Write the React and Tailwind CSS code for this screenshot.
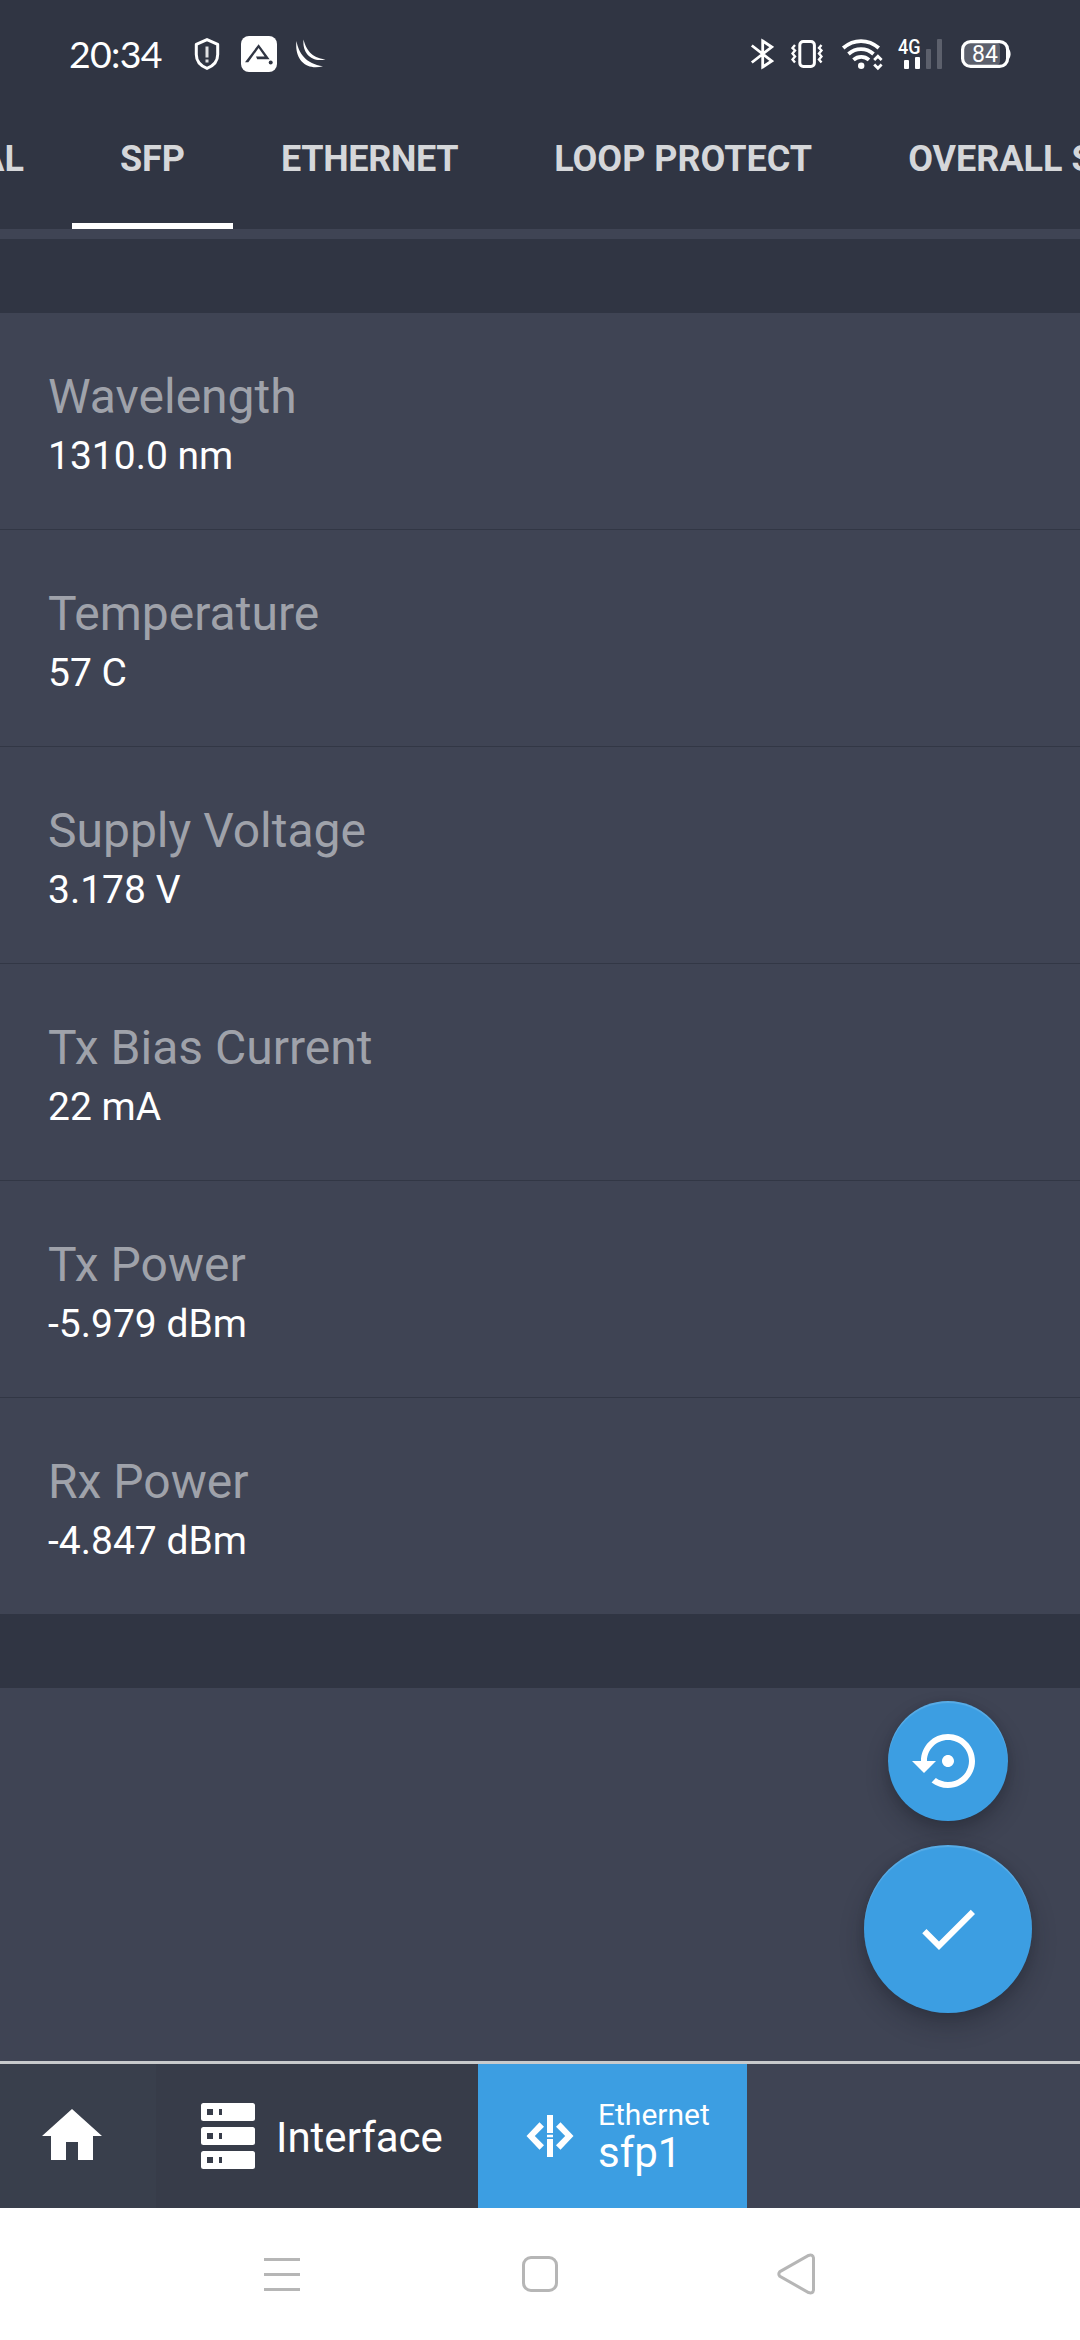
const tabs = [
  ['ETHERNET', 'tracking-[-0.35px]'],
  ['LOOP PROTECT', 'tracking-normal'],
  ['OVERALL STATS', 'tracking-normal'],
];

const rows = [
  ['Wavelength', '1310.0 nm'],
  ['Temperature', '57 C'],
  ['Supply Voltage', '3.178 V'],
  ['Tx Bias Current', '22 mA'],
  ['Tx Power', '-5.979 dBm'],
  ['Rx Power', '-4.847 dBm'],
];

function ShieldIcon() {
  return (
    <svg className="ml-[31px] h-9 w-[30px]" viewBox="0 0 30 36" fill="none" stroke="#fff">
      <path d="M15 3.600 25.700 8.400V18.500C25.700 25 21.500 29.800 15 32.400 8.500 29.800 4.300 25 4.300 18.500V8.400Z" strokeWidth="3" strokeLinejoin="round" />
      <path d="M15 10.500V21.500M15 23.500v3" strokeWidth="3" strokeOpacity="0.85" />
    </svg>
  );
}

function BadgeIcon() {
  return (
    <svg className="ml-[19px] size-9" viewBox="0 0 36 36">
      <rect width="36" height="36" rx="8" fill="#fff" />
      <path d="M4 26.300H7.300L17.600 12 23.600 20.600H15L16.200 23.200H28.600L17.600 8.200Z" fill="#303543" />
      <circle cx="29.700" cy="26.500" r="2" fill="#303543" />
    </svg>
  );
}

function SwooshIcon() {
  return (
    <svg className="ml-[18px] h-9 w-8" viewBox="0 0 32 36" fill="#fff">
      <path d="M1.500 5C3.500 17 11 28 28 30.200C12 35 -1 24 1.500 5Z" />
      <path d="M8.500 3.500C11 13 16 22 30.500 23.200C18 27 7 18 8.500 3.500Z" />
    </svg>
  );
}

function BluetoothIcon() {
  return (
    <svg className="h-9 w-6" viewBox="0 0 24 36" fill="none" stroke="#fff" strokeWidth="2.800">
      <path d="M1.800 9.500 21.700 25 12.700 31V5L21.700 11 1.800 26.500" />
    </svg>
  );
}

function VibrateIcon() {
  return (
    <svg className="ml-[17px] h-9 w-8" viewBox="0 0 32 36" fill="none" stroke="#fff">
      <rect x="8.800" y="5.500" width="14.600" height="25" rx="3.500" strokeWidth="3" />
      <path d="M4 9 1.500 12 4 14.500 1.500 17.500 4 20.500 1.500 23.500 4 26.500M30.500 9 28 12l2.500 2.500-2.500 3 2.500 3-2.500 3 2.500 3" strokeWidth="2.400" />
    </svg>
  );
}

function WifiIcon() {
  return (
    <svg className="ml-[18px] h-9 w-[42px]" viewBox="0 0 42 36" fill="none" stroke="#fff">
      <path d="M2.200 12C13 2.800 27 2.800 37.800 12" strokeWidth="3.800" />
      <path d="M7.500 18C14.800 11.500 25.200 11.500 32.500 18" strokeWidth="3.800" />
      <path d="M12.500 23.800C17 19.800 23.500 19.800 28 23.800" strokeWidth="3.800" />
      <circle cx="20.200" cy="29.800" r="3.200" fill="#fff" stroke="none" />
      <path d="M33.200 24 36.900 20.300 40.600 24M33.200 28.500 36.900 32.200 40.600 28.500" strokeWidth="2.800" />
    </svg>
  );
}

function SignalIcon() {
  return (
    <svg className="ml-[13px] h-9 w-[48px]" viewBox="0 0 48 36" fill="#fff">
      <text x="2" y="18" fontFamily="Roboto, sans-serif" fontSize="20.500" fontWeight="500" textLength="22.500" lengthAdjust="spacingAndGlyphs">4G</text>
      <rect x="8" y="24" width="5" height="9" rx="1" />
      <rect x="19" y="21" width="5" height="12" rx="1" />
      <rect x="30" y="13" width="5" height="20" rx="1" fill="#5c606c" />
      <rect x="41" y="3" width="5" height="30" rx="1" fill="#5c606c" />
    </svg>
  );
}

function BatteryIcon() {
  return (
    <svg className="ml-4 h-9 w-[52px]" viewBox="0 0 52 36">
      <rect x="4" y="7" width="36" height="22" rx="4" fill="#5c606c" />
      <rect x="2.600" y="5.600" width="45" height="24.800" rx="8" fill="none" stroke="#fff" strokeWidth="3.200" />
      <path d="M48.500 13c2.800 1.500 2.800 8.500 0 10Z" fill="#fff" />
      <text x="12" y="25.500" fill="#fff" fontFamily="Roboto, sans-serif" fontSize="23" textLength="26">84</text>
    </svg>
  );
}

function StatusBar() {
  return (
    <div className="flex h-[108px] shrink-0 items-center justify-between pr-[68px] pl-[69px]">
      <div className="flex items-center">
        <span className="w-[92px] font-[Lato,sans-serif] text-[37.5px] leading-none tracking-[-0.7px] whitespace-nowrap text-white">20:34</span>
        <ShieldIcon />
        <BadgeIcon />
        <SwooshIcon />
      </div>
      <div className="flex items-center">
        <BluetoothIcon />
        <VibrateIcon />
        <WifiIcon />
        <SignalIcon />
        <BatteryIcon />
      </div>
    </div>
  );
}

function TabBar() {
  return (
    <div className="flex h-[121px] shrink-0 overflow-hidden text-[36px] leading-[103px] font-bold whitespace-nowrap text-[#d5d7da]">
      <div className="flex w-[72px] shrink-0 justify-end overflow-hidden pr-12">
        <span>GENERAL</span>
      </div>
      <div className="w-[161px] shrink-0 border-b-[6px] border-white text-center">SFP</div>
      {tabs.map(([name, tracking]) => (
        <div key={name} className={`shrink-0 px-12 ${tracking}`}>{name}</div>
      ))}
    </div>
  );
}

function Fabs() {
  return (
    <div className="flex flex-col items-end gap-6 pt-[13px] pr-12">
      <button className="mr-6 flex size-[120px] items-center justify-center rounded-full bg-[#3c9ee2] shadow-[0_12px_22px_rgba(20,24,34,0.3),0_2px_8px_rgba(20,24,34,0.15),inset_0_2px_1px_rgba(255,255,255,0.15)]">
        <svg className="size-[72px]" viewBox="0 0 24 24" fill="#fff">
          <path d="M14 12c0-1.100-.9-2-2-2s-2 .9-2 2 .9 2 2 2 2-.9 2-2zm-2-9c-4.970 0-9 4.030-9 9H0l4 4 4-4H5c0-3.870 3.130-7 7-7s7 3.130 7 7-3.130 7-7 7c-1.510 0-2.910-.49-4.060-1.300l-1.420 1.440C8.040 20.300 9.940 21 12 21c4.970 0 9-4.030 9-9s-4.030-9-9-9z" />
        </svg>
      </button>
      <button className="flex size-[168px] items-center justify-center rounded-full bg-[#3c9ee2] shadow-[0_12px_24px_rgba(20,24,34,0.3),0_2px_8px_rgba(20,24,34,0.15),inset_0_2px_1px_rgba(255,255,255,0.15)]">
        <svg className="size-[72px]" viewBox="0 0 24 24" fill="#fff">
          <path d="M9 16.170 4.830 12l-1.420 1.410L9 19 21 7l-1.410-1.410z" />
        </svg>
      </button>
    </div>
  );
}

function ServerIcon() {
  return (
    <svg className="size-[72px]" viewBox="0 0 72 72">
      {[3, 27, 51].map((y) => (
        <g key={y}>
          <rect x="9" y={y} width="54" height="18" rx="2.500" fill="#fff" />
          <rect x="15" y={y + 6} width="6" height="6" fill="#373c49" />
          <rect x="27" y={y + 6} width="3" height="6" fill="#373c49" />
        </g>
      ))}
    </svg>
  );
}

function EthernetIcon() {
  return (
    <svg className="size-[72px]" viewBox="0 0 72 72" fill="#fff">
      <path d="M12.500 36 25.500 22.300 30 26.700 20.800 36 30 45.300 25.500 49.700ZM59.500 36 46.500 22.300 42 26.700 51.200 36 42 45.300 46.500 49.700Z" />
      <path d="M33 15h6v18h-6zM33 34.800h6v2.400h-6zM33 39h6v18h-6z" />
    </svg>
  );
}

function BottomBar() {
  return (
    <div className="flex h-[147px] shrink-0 border-t-[3px] border-[#c8cacc] text-white">
      <div className="flex w-[156px] items-center bg-[#393f4c] pl-9">
        <svg className="size-[72px]" viewBox="0 0 24 24" fill="#fff">
          <path d="M10 20v-6h4v6h5v-8h3L12 3 2 12h3v8z" />
        </svg>
      </div>
      <div className="flex w-[322px] items-center gap-3 bg-[#373c49] pl-9">
        <ServerIcon />
        <span className="pt-1 text-[42px] leading-[50px]">Interface</span>
      </div>
      <div className="flex w-[269px] items-center gap-3 bg-[#3c9ee2] pl-9">
        <EthernetIcon />
        <div className="flex flex-col pt-1">
          <span className="text-[30px] leading-[30px]">Ethernet</span>
          <span className="text-[42px] leading-[46px]">sfp1</span>
        </div>
      </div>
    </div>
  );
}

function SystemNav() {
  return (
    <div className="flex h-[132px] shrink-0 items-center bg-white pl-[264px]">
      <svg className="h-[42px] w-9" viewBox="0 0 36 42" stroke="#b6b6b6" strokeWidth="3">
        <path d="M0 6.500H36M0 21.500H36M0 36.500H36" />
      </svg>
      <svg className="ml-[222px] h-[42px] w-9" viewBox="0 0 36 42" fill="none" stroke="#b6b6b6" strokeWidth="3">
        <rect x="1.500" y="4.500" width="33" height="33" rx="7.500" />
      </svg>
      <svg className="ml-[219px] h-[42px] w-[40px]" viewBox="0 0 40 42" fill="none" stroke="#b6b6b6" strokeWidth="3">
        <path d="M2.900 18.600 31.500 2.500Q36 1 36.500 5V37Q36 41 31.500 39.500L2.900 23.400Q.8 21 2.900 18.600Z" />
      </svg>
    </div>
  );
}

export default function App() {
  return (
    <div className="flex h-[2340px] w-[1080px] flex-col overflow-hidden bg-[#3f4454] font-[Roboto,sans-serif]">
      <header className="flex shrink-0 flex-col bg-[#303543]">
        <StatusBar />
        <TabBar />
      </header>
      <main className="flex flex-1 flex-col pt-[10px]">
        <div className="h-[74px] shrink-0 bg-[#303543]" />
        <div className="divide-y divide-[#323745]">
          {rows.map(([label, value]) => (
            <div key={label} className="box-content h-[162px] pt-[54px] pl-12">
              <div className="text-[48px] leading-[60px] text-[#9fa2aa]">{label}</div>
              <div className="text-[39px] leading-[58px] text-white">{value}</div>
            </div>
          ))}
        </div>
        <div className="h-[74px] shrink-0 bg-[#303543]" />
        <Fabs />
      </main>
      <BottomBar />
      <SystemNav />
    </div>
  );
}
